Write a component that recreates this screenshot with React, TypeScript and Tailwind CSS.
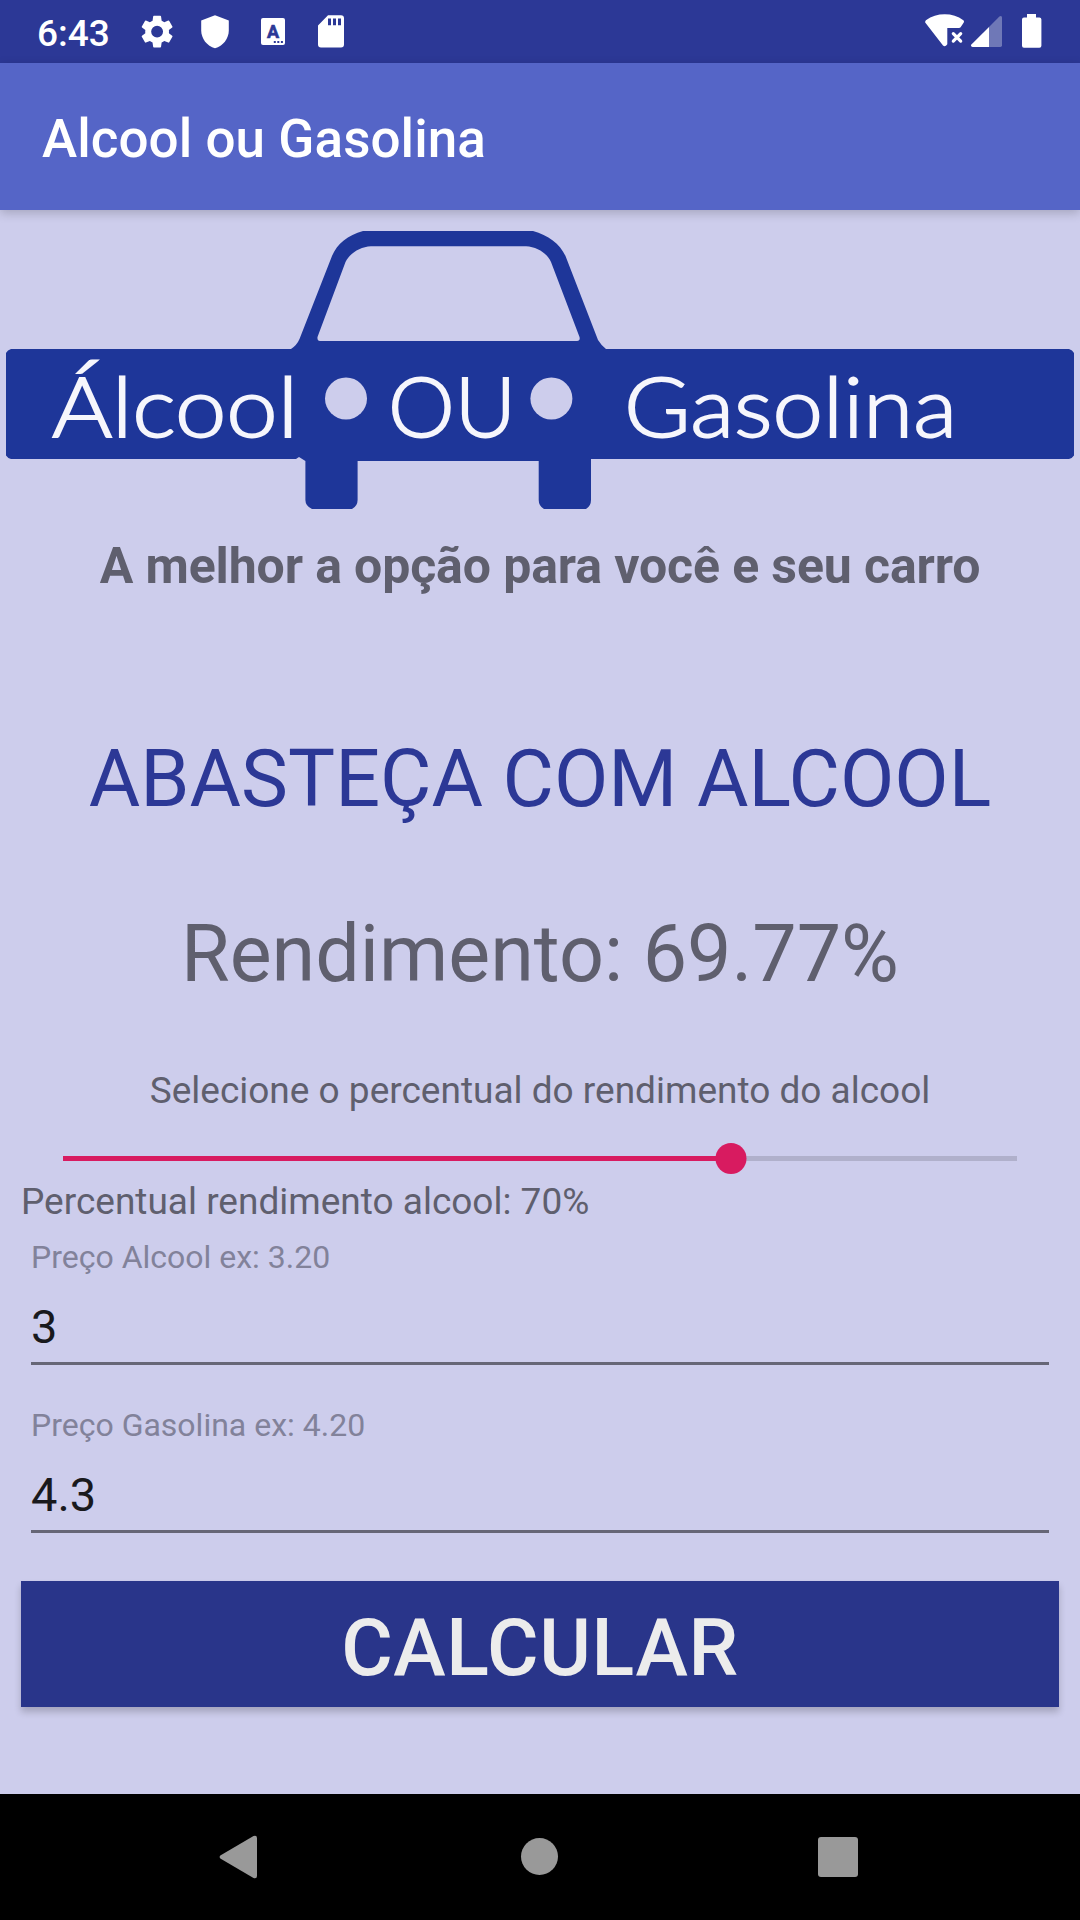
import React from "react";

function StatusBar() {
  return (
    <header className="flex h-[63px] justify-between bg-[#2c3896] text-white">
      <div className="flex">
        <span className="ml-[37px] w-[86px] text-[37px] leading-[67px] font-medium">6:43</span>
        <svg className="h-[63px] w-[68px]" viewBox="123 0 68 63" fill="currentColor">
          <g transform="translate(137.3 11.8) scale(1.65)">
            <path d="M19.14 12.94c.04-.3.06-.61.06-.94s-.02-.64-.07-.94l2.03-1.58a.49.49 0 0 0 .12-.61l-1.92-3.32a.49.49 0 0 0-.59-.22l-2.39.96c-.5-.38-1.03-.7-1.62-.94l-.36-2.54a.48.48 0 0 0-.48-.41h-3.84a.47.47 0 0 0-.47.41l-.36 2.54c-.59.24-1.13.57-1.62.94l-2.39-.96a.47.47 0 0 0-.59.22L2.74 8.87a.47.47 0 0 0 .12.61l2.03 1.58c-.05.3-.09.63-.09.94s.02.64.07.94l-2.03 1.58a.49.49 0 0 0-.12.61l1.92 3.32c.12.22.37.29.59.22l2.39-.96c.5.38 1.03.7 1.62.94l.36 2.54c.05.24.24.41.48.41h3.84c.24 0 .44-.17.47-.41l.36-2.54c.59-.24 1.13-.56 1.62-.94l2.39.96c.22.08.47 0 .59-.22l1.92-3.32a.47.47 0 0 0-.12-.61zM12 15.6a3.6 3.6 0 1 1 0-7.2 3.6 3.6 0 0 1 0 7.2z" />
          </g>
        </svg>
        <svg className="h-[63px] w-[54px]" viewBox="191 0 54 63" fill="currentColor">
          <path d="M215 15.3 201.2 20.5V30.5C201.2 38.5 207 46.3 215 48.2 223 46.3 228.8 38.5 228.8 30.5V20.5Z" />
        </svg>
        <svg className="h-[63px] w-[56px]" viewBox="245 0 56 63" fill="currentColor">
          <rect x="261" y="18" width="24" height="27" rx="2" />
          <text x="273" y="37.6" textAnchor="middle" className="fill-[#2c3896] stroke-[#2c3896] stroke-[0.6px] font-[Roboto] text-[18px] font-bold">A</text>
          <path className="fill-[#2c3896]" d="M273.8 41h2v2h-2zM277.3 41h2v2h-2zM280.9 41h2v2h-2z" />
        </svg>
        <svg className="h-[63px] w-[56px]" viewBox="301 0 56 63" fill="currentColor">
          <path d="M328 15.2h13a3 3 0 0 1 3 3V44.6a3 3 0 0 1-3 3H321a3 3 0 0 1-3-3V25.4z" />
          <path className="fill-[#2c3896]" d="M328 18.5h3v6.7h-3zM333 18.5h3v6.7h-3zM338 18.5h3v6.7h-3z" />
        </svg>
      </div>
      <div className="flex">
        <svg className="h-[63px] w-[48px]" viewBox="920 0 48 63" fill="currentColor">
          <path d="M925.2 22.6C925 21.5 925.4 20.6 926.3 19.9 936 12.3 953.5 12.3 963 19.9 964 20.6 964.4 21.6 963.6 22.7L960.6 27.2Q960 28 959 28H947.3V44.2L946.2 45.5Q944.6 47 943 45.5Z" />
          <path d="M953.3 33.7 960.7 41.1M960.7 33.7 953.3 41.1" stroke="currentColor" strokeWidth="3.2" strokeLinecap="round" />
        </svg>
        <svg className="h-[63px] w-[44px]" viewBox="968 0 44 63" fill="currentColor">
          <path fillOpacity="0.32" d="M989 27 999.4 16.4Q1002 15 1002 17.6V45.3Q1002 47 1000.3 47H989Z" />
          <path d="M989 27V47H972.5Q970 46.6 971.4 44.6Z" />
        </svg>
        <svg className="h-[63px] w-[68px]" viewBox="1012 0 68 63" fill="currentColor">
          <path d="M1027 14h9v3.6h3.4a2 2 0 0 1 2 2V45.8a2 2 0 0 1-2 2h-15.4a2 2 0 0 1-2-2V19.6a2 2 0 0 1 2-2h3z" />
        </svg>
      </div>
    </header>
  );
}

function Logo() {
  return (
    <svg className="mt-[21px] block h-[278px] w-[1080px] shrink-0" viewBox="0 231 1080 278">
      <g className="fill-[#1e3699]">
        <path
          fillRule="evenodd"
          d="M363 231H533C548 235 560 244 565.5 256L598 340Q601 345 606 349V355H291V349Q297 345 299.5 339L332 256C337 244 348 235 363 231ZM371 246.3C360 247 350 253 345.5 262L317.5 337Q317 341 320 341H577Q580.500 341 579.500 337L551 262C547 253 537 247 526 246.300Z"
        />
        <path d="M11 349H1069Q1072.500 350 1074 353V455.500Q1072.500 458 1069 459H591V500Q591 506 586 509H544Q538.700 506 538.700 500V461H357.600V500Q357.600 506 352 509H312Q305.400 506 305.400 500V461L299 457 296 459H11Q7.500 458 6 455.500V353Q7.500 350 11 349Z" />
      </g>
      <circle cx="346" cy="398.500" r="21" className="fill-[#cdcdec]" />
      <circle cx="551.400" cy="398.500" r="21" className="fill-[#cdcdec]" />
      <g className="fill-[#f6f6fc] stroke-[#f6f6fc] stroke-[1.8px] font-[Lato] text-[83px] font-light">
        <text x="52" y="436.500" textLength="246" lengthAdjust="spacingAndGlyphs">Álcool</text>
        <text x="388" y="436.500" textLength="128" lengthAdjust="spacingAndGlyphs">OU</text>
        <text x="624" y="436.500" textLength="333" lengthAdjust="spacingAndGlyphs">Gasolina</text>
      </g>
    </svg>
  );
}

function Slider({ value }: { value: number }) {
  return (
    <div className="relative mx-[63px] mt-[31px] flex h-[31px] items-center">
      <div className="h-[5px] w-full bg-[#b0b0cb]">
        <div className="h-full bg-[#d81b60]" style={{ width: `${value}%` }} />
      </div>
      <div
        className="absolute top-0 size-[31px] -translate-x-1/2 rounded-full bg-[#d81b60]"
        style={{ left: `${value}%` }}
      />
    </div>
  );
}

function Field({ label, value }: { label: string; value: string }) {
  return (
    <div className="mx-[31px] flex flex-col border-b-[3px] border-[#666676] pb-2">
      <span className="text-[32px] leading-[38px] text-[#82829a]">{label}</span>
      <span className="mt-[23px] text-[47px] leading-[55px] text-[#19191d]">{value}</span>
    </div>
  );
}

export default function App() {
  return (
    <div className="flex h-[1920px] w-[1080px] flex-col overflow-hidden bg-[#cdcdec] font-[Roboto,sans-serif] text-[#5f5f6e]">
      <StatusBar />
      <div className="z-10 flex h-[147px] shrink-0 items-center bg-[#5565c7] pt-[5px] pl-[42px] shadow-[0_3px_10px_rgba(0,0,0,0.2)]">
        <h1 className="text-[53px] leading-[62px] font-medium tracking-[0.05px] text-white">Alcool ou Gasolina</h1>
      </div>
      <main className="flex flex-1 flex-col">
        <Logo />
        <p className="mt-[27px] text-center text-[50px] leading-[60px] font-bold tracking-[-0.12px] whitespace-nowrap">
          A melhor a opção para você e seu carro
        </p>
        <p className="mt-[137px] text-center text-[79px] leading-[92px] whitespace-nowrap text-[#2c3896]">
          ABASTEÇA COM ALCOOL
        </p>
        <p className="mt-[83px] text-center text-[79px] leading-[92px]">Rendimento: 69.77%</p>
        <p className="mt-[69px] text-center text-[37px] leading-[43px]">
          Selecione o percentual do rendimento do alcool
        </p>
        <Slider value={70} />
        <p className="mt-1.5 mb-[15px] ml-[21px] text-[37px] leading-[43px]">Percentual rendimento alcool: 70%</p>
        <div className="flex flex-col gap-[41px]">
          <Field label="Preço Alcool ex: 3.20" value="3" />
          <Field label="Preço Gasolina ex: 4.20" value="4.3" />
        </div>
        <button className="mx-[21px] mt-12 flex h-[126px] items-center justify-center bg-[#29358a] pt-2 text-[79px] leading-[92px] font-medium tracking-[0.6px] text-[#ececec] shadow-[0_5px_7px_rgba(0,0,0,0.2)]">
          CALCULAR
        </button>
      </main>
      <nav className="flex h-[126px] shrink-0 items-center justify-between bg-black pr-[222px] pl-[219px] text-[#999999]">
        <svg className="h-[44px] w-[38px]" viewBox="0 0 38 44" fill="currentColor">
          <path d="M1.300 20.500 34.500 1Q38 0 38 3V41Q38 44 34.500 43L1.300 23.500Q0 22 1.300 20.500Z" />
        </svg>
        <div className="mb-px ml-1 size-[37px] rounded-full bg-[#999999]" />
        <div className="size-10 rounded-[3px] bg-[#999999]" />
      </nav>
    </div>
  );
}
